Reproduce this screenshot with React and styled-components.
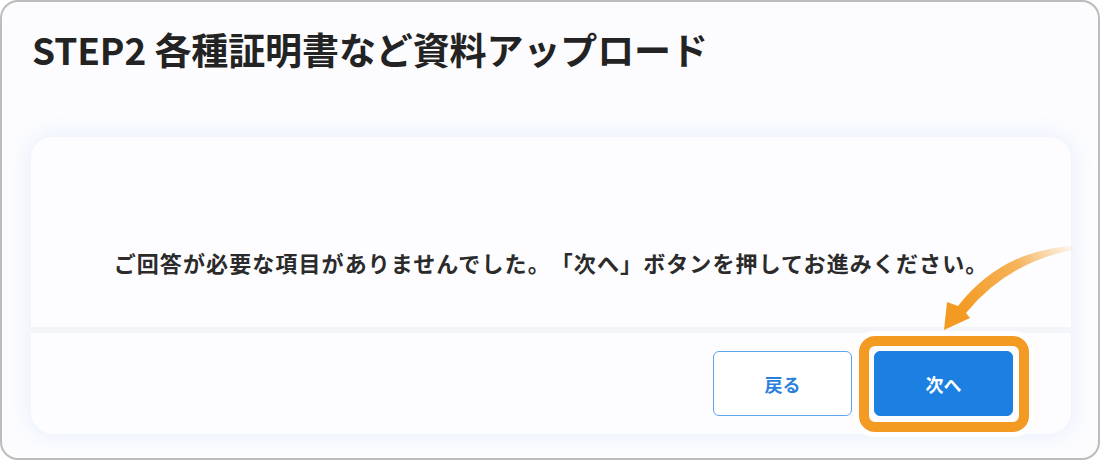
import React from "react";
import styled, { createGlobalStyle } from "styled-components";

const GlobalStyle = createGlobalStyle`
  html, body {
    margin: 0;
    padding: 0;
    background: #ffffff;
  }
  body {
    font-family: "Noto Sans CJK JP", "Noto Sans", sans-serif;
  }
`;

const App = () => {
  return (
    <>
      <GlobalStyle />
      <Frame>
        <Title>STEP2 各種証明書など資料アップロード</Title>
        <Card>
          <Content>
            <Message>
              ご回答が必要な項目がありませんでした。「次へ」ボタンを押してお進みください。
            </Message>
          </Content>
          <Footer>
            <Button>戻る</Button>
            <Highlight>
              <Button primary>次へ</Button>
            </Highlight>
          </Footer>
        </Card>
        <Arrow viewBox="0 0 1100 460">
          <defs>
            <linearGradient
              id="arrowFade"
              gradientUnits="userSpaceOnUse"
              x1="1073"
              y1="246"
              x2="962"
              y2="312"
            >
              <stop offset="0" stopColor="#f39a22" stopOpacity="0.05" />
              <stop offset="0.45" stopColor="#f39a22" stopOpacity="0.75" />
              <stop offset="1" stopColor="#f39a22" stopOpacity="1" />
            </linearGradient>
          </defs>
          <path
            d="M1073 246 Q1002 250 958 306 L947 302 L944 330 L970 318 L966 313 Q1008 262 1073 250 Z"
            fill="url(#arrowFade)"
          />
        </Arrow>
      </Frame>
    </>
  );
};

export default App;

const Frame = styled.div`
  position: relative;
  box-sizing: border-box;
  width: 1100px;
  height: 460px;
  padding: 25px 27px 0 29px;
  border: 2px solid #bcbcbc;
  border-radius: 18px;
  background-color: #fcfcfe;
  overflow: hidden;
`;

const Title = styled.h1`
  margin: 0 0 0 1px;
  font-size: 37px;
  line-height: 44px;
  font-weight: 700;
  color: #232323;
  letter-spacing: -0.1px;
`;

const Card = styled.div`
  margin-top: 66px;
  height: 297px;
  border-radius: 22px;
  background-color: #fdfdff;
  box-shadow: 0 0 20px 4px rgba(80, 150, 240, 0.1);
  display: flex;
  flex-direction: column;
`;

const Content = styled.div`
  height: 190px;
  box-sizing: border-box;
  padding-top: 110px;
  text-align: center;
`;

const Message = styled.p`
  margin: 0;
  font-size: 22px;
  line-height: 30px;
  font-weight: 700;
  color: #2b2b2b;
  letter-spacing: 1.1px;
  text-spacing-trim: space-all;
`;

const Footer = styled.div`
  flex: 1;
  display: flex;
  justify-content: flex-end;
  align-items: center;
  gap: 22px;
  padding-right: 58px;
  border-top: 6px solid #f3f5f9;
`;

const Button = styled.button`
  width: 139px;
  height: 65px;
  box-sizing: border-box;
  border-radius: 6px;
  border: 1.5px solid ${(p) => (p.primary ? "#1b80e2" : "#62a4ec")};
  background-color: ${(p) => (p.primary ? "#1b80e2" : "#ffffff")};
  color: ${(p) => (p.primary ? "#ffffff" : "#2a7fdc")};
  font-family: "Noto Sans CJK JP", sans-serif;
  font-size: 18px;
  font-weight: 700;
  cursor: pointer;
`;

const Highlight = styled.div`
  position: relative;
  display: flex;

  &::before {
    content: "";
    position: absolute;
    top: -15px;
    left: -15px;
    right: -16px;
    bottom: -16px;
    border: 10px solid #f39a22;
    border-radius: 16px;
    box-shadow: 0 0 0 5px #ffffff;
    pointer-events: none;
  }
`;

const Arrow = styled.svg`
  position: absolute;
  left: -2px;
  top: -2px;
  width: 1100px;
  height: 460px;
  pointer-events: none;
`;
